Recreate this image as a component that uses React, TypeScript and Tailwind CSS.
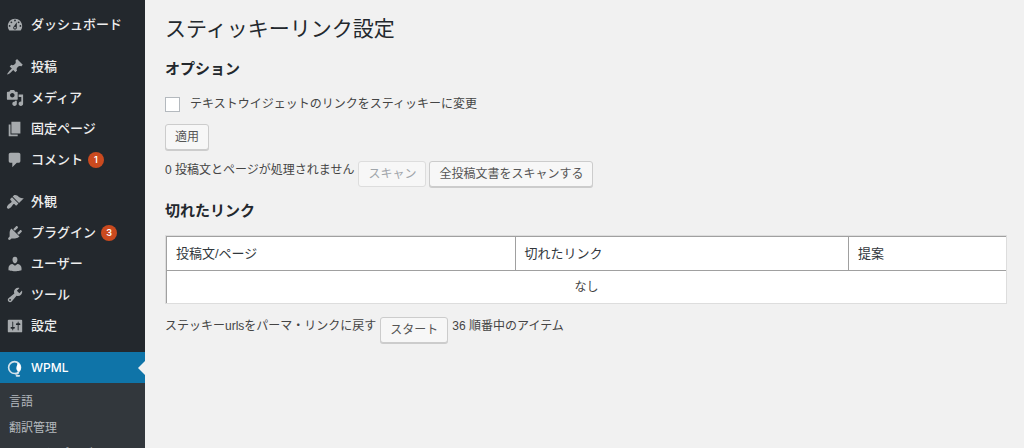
import React from "react";

const icons = {
  dashboard:
    "M3.76 16h12.48c1.1-1.37 1.76-3.11 1.76-5 0-4.42-3.58-8-8-8s-8 3.58-8 8c0 1.89.66 3.63 1.76 5zM10 4c.55 0 1 .45 1 1s-.45 1-1 1-1-.45-1-1 .45-1 1-1zM6 6c.55 0 1 .45 1 1s-.45 1-1 1-1-.45-1-1 .45-1 1-1zm8 0c.55 0 1 .45 1 1s-.45 1-1 1-1-.45-1-1 .45-1 1-1zm-5.37 5.55L12 7v6c0 1.1-.9 2-2 2s-2-.9-2-2c0-.57.24-1.08.63-1.45zM4 10c.55 0 1 .45 1 1s-.45 1-1 1-1-.45-1-1 .45-1 1-1zm12 0c.55 0 1 .45 1 1s-.45 1-1 1-1-.45-1-1 .45-1 1-1zm-5 3c0-.55-.45-1-1-1s-1 .45-1 1 .45 1 1 1 1-.45 1-1z",
  post: "M10.44 3.02l1.82-1.82 6.36 6.35-1.83 1.82c-1.05-.68-2.48-.57-3.41.36l-.75.75c-.92.93-1.04 2.35-.35 3.41l-1.83 1.82-2.41-2.41-2.8 2.79c-.42.42-3.38 2.71-3.8 2.29s1.86-3.39 2.28-3.81l2.79-2.79L4.1 9.36l1.83-1.82c1.05.69 2.48.57 3.4-.36l.75-.75c.93-.92 1.05-2.35.36-3.41z",
  media:
    "M13 11V4c0-.55-.45-1-1-1h-1.67L9 1H5L3.67 3H2c-.55 0-1 .45-1 1v7c0 .55.45 1 1 1h10c.55 0 1-.45 1-1zM7 4.5c1.38 0 2.5 1.12 2.5 2.5S8.38 9.5 7 9.5 4.5 8.38 4.5 7 5.62 4.5 7 4.5zM14 6h5v10.5c0 1.38-1.12 2.5-2.5 2.5S14 17.88 14 16.5s1.12-2.5 2.5-2.5c.17 0 .34.02.5.05V9h-3V6zm-4 8.05V13h2v3.5c0 1.38-1.12 2.5-2.5 2.5S7 17.88 7 16.5 8.12 14 9.5 14c.17 0 .34.02.5.05z",
  page: "M6 15V2h10v13H6zm-1 1h8v2H3V5h2v11z",
  comments:
    "M5 2h9c1.1 0 2 .9 2 2v7c0 1.1-.9 2-2 2h-2l-5 5v-5H5c-1.1 0-2-.9-2-2V4c0-1.1.9-2 2-2z",
  appearance:
    "M14.48 11.06L7.41 3.99l1.5-1.5c.5-.56 2.3-.47 3.51.32 1.21.8 1.43 1.28 2.91 2.1 1.18.64 2.45 1.26 4.45.85zm-.71.71L6.7 4.7 4.93 6.47c-.39.39-.39 1.02 0 1.41l1.06 1.06c.39.39.39 1.03 0 1.42-.6.6-1.43 1.11-2.21 1.69-.35.26-.7.53-1.01.84C1.43 14.23.4 16.08 1.4 17.07c.99 1 2.84-.03 4.18-1.36.31-.31.58-.66.85-1.02.57-.78 1.08-1.61 1.69-2.21.39-.39 1.02-.39 1.41 0l1.06 1.06c.39.39 1.02.39 1.41 0z",
  plugins:
    "M13.11 4.36L9.87 7.6 8 5.73l3.24-3.24c.35-.34 1.05-.2 1.56.32.52.51.66 1.21.31 1.55zm-8 1.77l.91-1.12 9.01 9.01-1.19.84c-.71.71-2.63 1.16-3.82 1.16H6.14L4.9 17.26c-.59.59-1.54.59-2.12 0-.59-.58-.59-1.53 0-2.12l1.24-1.24v-3.88c0-1.13.4-3.19 1.09-3.89zm7.26 3.97l3.24-3.24c.34-.35 1.04-.21 1.55.31.52.51.66 1.21.31 1.55l-3.24 3.25z",
  users:
    "M10 9.25c-2.27 0-2.73-3.44-2.73-3.44C7 4.02 7.82 2 9.97 2c2.16 0 2.98 2.02 2.71 3.81 0 0-.41 3.44-2.68 3.44zm0 2.57L12.72 10c2.39 0 4.52 2.33 4.52 4.53v2.49s-3.65 1.13-7.24 1.13c-3.65 0-7.24-1.13-7.24-1.13v-2.49c0-2.25 1.94-4.48 4.47-4.48z",
  tools:
    "M16.68 9.77c-1.34 1.34-3.3 1.67-4.95.99l-5.41 6.52c-.99.99-2.59.99-3.58 0s-.99-2.59 0-3.57l6.52-5.42c-.68-1.65-.35-3.61.99-4.95 1.28-1.28 3.12-1.62 4.72-1.06l-2.89 2.89 2.82 2.82 2.86-2.87c.53 1.58.18 3.39-1.08 4.65zM3.81 16.21c.4.39 1.04.39 1.43 0 .4-.4.4-1.04 0-1.43-.39-.4-1.03-.4-1.43 0-.39.39-.39 1.03 0 1.43z",
  settings:
    "M18 16V4c0-.55-.45-1-1-1H3c-.55 0-1 .45-1 1v12c0 .55.45 1 1 1h14c.55 0 1-.45 1-1zM8 11h1c.55 0 1 .45 1 1s-.45 1-1 1H8v1.5c0 .28-.22.5-.5.5s-.5-.22-.5-.5V13H6c-.55 0-1-.45-1-1s.45-1 1-1h1V5.5c0-.28.22-.5.5-.5s.5.22.5.5V11zm5-2h-1c-.55 0-1-.45-1-1s.45-1 1-1h1V5.5c0-.28.22-.5.5-.5s.5.22.5.5V7h1c.55 0 1 .45 1 1s-.45 1-1 1h-1v5.5c0 .28-.22.5-.5.5s-.5-.22-.5-.5V9z",
};

type Item = { icon: keyof typeof icons; label: string; count?: number };

const groups: Item[][] = [
  [{ icon: "dashboard", label: "ダッシュボード" }],
  [
    { icon: "post", label: "投稿" },
    { icon: "media", label: "メディア" },
    { icon: "page", label: "固定ページ" },
    { icon: "comments", label: "コメント", count: 1 },
  ],
  [
    { icon: "appearance", label: "外観" },
    { icon: "plugins", label: "プラグイン", count: 3 },
    { icon: "users", label: "ユーザー" },
    { icon: "tools", label: "ツール" },
    { icon: "settings", label: "設定" },
  ],
];

const submenu = ["言語", "翻訳管理", "テーマとプラグインのローカリゼーション"];

function MenuItem({ icon, label, count }: Item) {
  return (
    <li>
      <a href="#" className="flex h-[31px] items-center pl-1.5 text-[13px] font-medium text-[#eeeeee]">
        <svg viewBox="0 0 20 20" className="mr-[7px] size-[18px] fill-[#a6aaad]" fillRule="evenodd" aria-hidden="true">
          <path d={icons[icon]} />
        </svg>
        {label}
        {count !== undefined && (
          <span className="ml-[5px] flex size-4 items-center justify-center rounded-full bg-[#ca4a1f] font-['Inter',sans-serif] text-[9px] font-semibold text-white">
            {count}
          </span>
        )}
      </a>
    </li>
  );
}

function Sidebar() {
  return (
    <nav className="w-[145px] shrink-0 overflow-hidden bg-[#23282d] pt-[9px]">
      <div className="flex flex-col gap-[11px]">
        {groups.map((group, i) => (
          <ul key={i}>
            {group.map((item) => (
              <MenuItem key={item.label} {...item} />
            ))}
          </ul>
        ))}
        <div>
          <a
            href="#"
            aria-current="page"
            className="relative flex h-[31px] items-center bg-[#0f74a8] pl-1.5 font-['Inter',sans-serif] text-xs font-medium text-white"
          >
            <svg viewBox="0 0 20 20" className="mr-[7px] size-[18px]" fill="none" aria-hidden="true">
              <circle cx="9.500" cy="9.500" r="6.600" stroke="#d5e3eb" strokeWidth="1.800" />
              <path d="M12.700 4.200c3.200 1.600 4.600 4.700 3.400 7.600-.6 1.300-1.700 2-2.700 2.200-1.600-1.200-2.200-2.800-1.800-4.700.3-1.700 1.200-3 1.100-5.100z" fill="#fff" />
              <path d="M13.500 14.800c.2 1.300-.6 1.900-2.600 1.800M11.600 18.700h3.200" stroke="#d5e3eb" strokeWidth="1.800" strokeLinecap="round" />
            </svg>
            WPML
            <svg viewBox="0 0 7 14" className="absolute right-0 h-3.5 w-[7px]" aria-hidden="true">
              <path d="M7 0v14L0 7z" fill="#f1f1f1" />
            </svg>
          </a>
          <ul className="bg-[#32373c] py-1.5">
            {submenu.map((label) => (
              <li key={label}>
                <a href="#" className="block px-[9px] py-1 text-xs leading-[18px] text-[#b4b9be]">
                  {label}
                </a>
              </li>
            ))}
          </ul>
        </div>
      </div>
    </nav>
  );
}

function Button({ children, disabled }: { children: React.ReactNode; disabled?: boolean }) {
  return (
    <button
      type="button"
      disabled={disabled}
      className="h-[26px] rounded-[3px] border border-[#cccccc] bg-[#f7f7f7] px-[9px] text-xs text-[#555555] shadow-[0_1px_0_#cccccc] disabled:border-[#dddddd] disabled:text-[#a0a5aa] disabled:shadow-none"
    >
      {children}
    </button>
  );
}

const heading = "text-[15px] leading-5 font-bold text-[#23282d]";
const cell = "border-t border-l border-[#a0a0a0]";

export default function App() {
  return (
    <div className="flex h-screen overflow-hidden bg-[#f1f1f1] font-['Liberation_Sans','Noto_Sans_CJK_JP',sans-serif] text-xs text-[#444444]">
      <Sidebar />
      <main className="min-w-0 flex-1 pt-[15px] pr-[17px] pl-5">
        <h1 className="text-[21px] leading-7 text-[#23282d]">スティッキーリンク設定</h1>
        <h2 className={`mt-4 ${heading}`}>オプション</h2>
        <label className="mt-4 flex items-center gap-2.5 leading-[18px]">
          <input
            type="checkbox"
            className="size-[15px] appearance-none border border-[#b4b9be] bg-white checked:bg-[#0073aa]"
          />
          テキストウイジェットのリンクをスティッキーに変更
        </label>
        <div className="mt-[11px] flex">
          <Button>適用</Button>
        </div>
        <div className="mt-[11px] flex items-start gap-1">
          <span className="leading-[18px]">0 投稿文とページが処理されません</span>
          <div className="flex gap-[3px]">
            <Button disabled>スキャン</Button>
            <Button>全投稿文書をスキャンする</Button>
          </div>
        </div>
        <h2 className={`mt-3.5 ${heading}`}>切れたリンク</h2>
        <table className="mt-3.5 w-full table-fixed border-separate border-spacing-0 border border-[#dddddd] bg-white">
          <thead>
            <tr className="h-[34px] text-left text-[13px] text-[#32373c]">
              <th scope="col" className={`w-[41.5%] px-[9px] font-normal ${cell}`}>投稿文/ページ</th>
              <th scope="col" className={`w-[39.7%] px-[9px] font-normal ${cell}`}>切れたリンク</th>
              <th scope="col" className={`px-[9px] font-normal ${cell}`}>提案</th>
            </tr>
          </thead>
          <tbody>
            <tr className="h-[33px] text-center">
              <td colSpan={3} className={cell}>なし</td>
            </tr>
          </tbody>
        </table>
        <div className="mt-[13px] flex items-start gap-1">
          <span className="leading-[18px]">ステッキーurlsをパーマ・リンクに戻す</span>
          <Button>スタート</Button>
          <span className="leading-[18px]">36 順番中のアイテム</span>
        </div>
      </main>
    </div>
  );
}
